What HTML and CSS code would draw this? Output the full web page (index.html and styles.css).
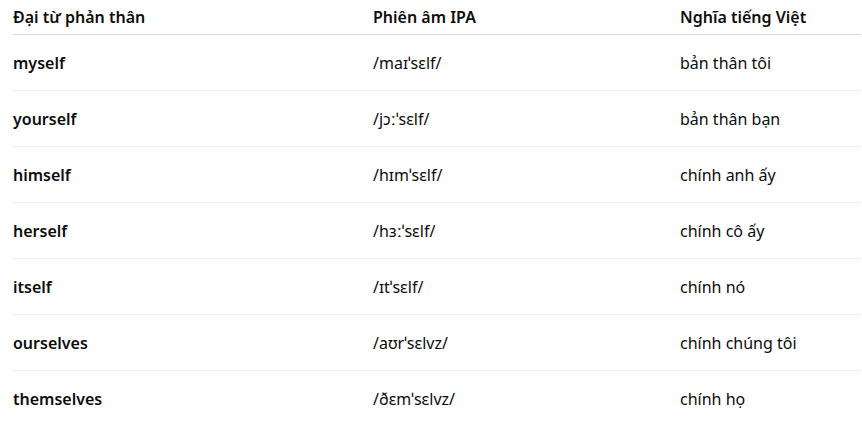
FILE: index.html
```html
<!DOCTYPE html>
<html lang="vi">
<head>
<meta charset="utf-8">
<link rel="stylesheet" href="styles.css">
</head>
<body>
<table class="pron-table">
  <thead>
    <tr>
      <th class="c1">Đại từ phản thân</th>
      <th class="c2">Phiên âm IPA</th>
      <th class="c3">Nghĩa tiếng Việt</th>
    </tr>
  </thead>
  <tbody>
    <tr><td class="word">myself</td><td>/maɪˈsɛlf/</td><td>bản thân tôi</td></tr>
    <tr><td class="word">yourself</td><td>/jɔːˈsɛlf/</td><td>bản thân bạn</td></tr>
    <tr><td class="word">himself</td><td>/hɪmˈsɛlf/</td><td>chính anh ấy</td></tr>
    <tr><td class="word">herself</td><td>/hɜːˈsɛlf/</td><td>chính cô ấy</td></tr>
    <tr><td class="word">itself</td><td>/ɪtˈsɛlf/</td><td>chính nó</td></tr>
    <tr><td class="word">ourselves</td><td>/aʊrˈsɛlvz/</td><td>chính chúng tôi</td></tr>
    <tr><td class="word">themselves</td><td>/ðɛmˈsɛlvz/</td><td>chính họ</td></tr>
  </tbody>
</table>
</body>
</html>
```

FILE: styles.css
```css
html, body {
  margin: 0;
  padding: 0;
  background: #ffffff;
}
body {
  font-family: "Noto Sans", "Open Sans", sans-serif;
  font-size: 16px;
  color: #0d0d0d;
}
.pron-table {
  margin-left: 13px;
  width: 848px;
  border-collapse: collapse;
  table-layout: fixed;
}
.pron-table th,
.pron-table td {
  text-align: left;
  padding: 0;
  vertical-align: middle;
}
.pron-table th {
  font-weight: 600;
  height: 33px;
  padding-bottom: 1px;
  border-bottom: 1px solid #d9d9d9;
}
.pron-table td {
  height: 55px;
  border-bottom: 1px solid #ececec;
}
.pron-table tbody tr:last-child td {
  border-bottom: none;
}
.c1 { width: 360px; }
.c2 { width: 307px; }
.c3 { width: auto; }
.word { font-weight: 600; }
```
